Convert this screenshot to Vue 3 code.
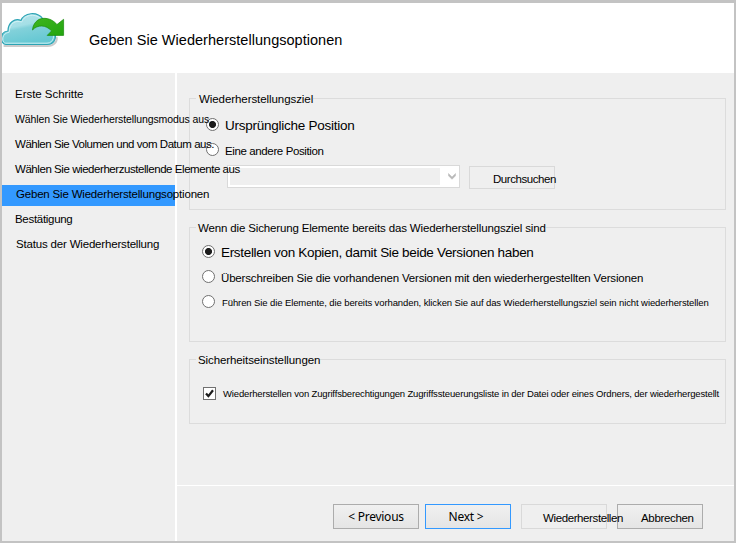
<script setup>
const steps = [
  { text: 'Erste Schritte', cls: 's1' },
  { text: 'Wählen Sie Wiederherstellungsmodus aus.', cls: 's2' },
  { text: 'Wählen Sie Volumen und vom Datum aus.', cls: 's3' },
  { text: 'Wählen Sie wiederherzustellende Elemente aus', cls: 's4' },
  { text: 'Geben Sie Wiederherstellungsoptionen', cls: 's5', active: true },
  { text: 'Bestätigung', cls: 's6' },
  { text: 'Status der Wiederherstellung', cls: 's7' },
]
</script>

<template>
  <div class="window">
    <header class="header">
      <svg class="logo" viewBox="0 0 64 40" width="64" height="40">
        <defs>
          <linearGradient id="cloud" x1="0" y1="0" x2="0.35" y2="1">
            <stop offset="0" stop-color="#b9e6ec" />
            <stop offset="0.45" stop-color="#a4dfe6" />
            <stop offset="0.55" stop-color="#82d1da" />
            <stop offset="1" stop-color="#66c8d3" />
          </linearGradient>
          <linearGradient id="arrow" x1="0" y1="0" x2="1" y2="1">
            <stop offset="0" stop-color="#3fb51f" />
            <stop offset="1" stop-color="#23a50f" />
          </linearGradient>
        </defs>
        <path d="M1 32 H45 C51 32 55 28 54 23" fill="none" stroke="#b5b5b5" stroke-width="2" transform="translate(0.6 1)" opacity="0.7" />
        <path d="M4 31.500 C-2 31.500 -3 19 6 18 C6 9 13 5 19 7.500 C22 -0.500 35 -2 41 6 C48 6 51 12 50 17 C56 20.500 54 31.500 45 31.500 Z"
          fill="url(#cloud)" stroke="#2ba3b4" stroke-width="1.2" />
        <path d="M4 30.200 C-.5 30.200 -1 20.400 7.200 19.200 C7.200 10.500 13.500 6.800 19.700 9 C22.500 1.200 34.500 -.4 40.300 7.300 C46 7.300 49.700 12.500 48.700 17.700 C53.500 21 52 30.200 45 30.200 Z"
          fill="none" stroke="#d6f3f6" stroke-width="0.9" />
        <path d="M30.500 17 C31 10 36 5.300 42 5.300 C47.500 5.300 52 8 55 11.500 L61.600 6.300 V22.400 H45.200 L49.500 18 C44 11.500 35.500 11.500 30.500 17 Z"
          fill="url(#arrow)" stroke="#188a0c" stroke-width="0.7" />
      </svg>
      <h1 class="title">Geben Sie Wiederherstellungsoptionen</h1>
    </header>

    <div class="body">
      <nav class="nav">
        <div v-for="s in steps" :key="s.text" class="step" :class="[s.cls, { active: s.active }]">{{ s.text }}</div>
      </nav>

      <div class="content">
        <main class="main">
          <section class="group target">
            <div class="legend l1">Wiederherstellungsziel</div>
            <div class="option big o1"><i class="radio on"></i><span>Ursprüngliche Position</span></div>
            <div class="option o2"><i class="radio"></i><span>Eine andere Position</span></div>
            <div class="picker">
              <div class="combo">
                <div class="field"></div>
                <svg class="chevron" viewBox="0 0 8 7" width="8" height="7"><path d="M0.500 0.500 L4 4 L7.500 0.500 V2.800 L4 6.300 L0.500 2.800 Z" fill="#b8b8b8" stroke="#b8b8b8" stroke-width="0.5" /></svg>
              </div>
              <div class="btn browse">Durchsuchen</div>
            </div>
          </section>

          <section class="group existing">
            <div class="legend l2">Wenn die Sicherung Elemente bereits das Wiederherstellungsziel sind</div>
            <div class="option big o3"><i class="radio on"></i><span>Erstellen von Kopien, damit Sie beide Versionen haben</span></div>
            <div class="option o4"><i class="radio"></i><span>Überschreiben Sie die vorhandenen Versionen mit den wiederhergestellten Versionen</span></div>
            <div class="option small o5"><i class="radio"></i><span>Führen Sie die Elemente, die bereits vorhanden, klicken Sie auf das Wiederherstellungsziel sein nicht wiederherstellen</span></div>
          </section>

          <section class="group security">
            <div class="legend l3">Sicherheitseinstellungen</div>
            <div class="option small o6">
              <svg class="check" viewBox="0 0 13 13" width="13" height="13">
                <rect x="0.500" y="0.500" width="12" height="12" fill="#fff" stroke="#707070" />
                <path d="M3 6.400 L5.400 9.100 L10 3.200" fill="none" stroke="#1c1c1c" stroke-width="2.200" />
              </svg>
              <span>Wiederherstellen von Zugriffsberechtigungen Zugriffssteuerungsliste in der Datei oder eines Ordners, der wiederhergestellt</span>
            </div>
          </section>
        </main>

        <footer class="footer">
          <div class="btn raised latin">&lt; Previous</div>
          <div class="btn raised latin primary">Next &gt;</div>
          <div class="btn offset restore">Wiederherstellen</div>
          <div class="btn raised offset cancel">Abbrechen</div>
        </footer>
      </div>
    </div>
  </div>
</template>

<style>
body {
  margin: 0;
  background: #c3c3c3;
}
</style>

<style scoped>
.window {
  box-sizing: border-box;
  width: 736px;
  height: 543px;
  border: 2px solid #c3c3c3;
  border-top-width: 3px;
  background: #efefef;
  display: flex;
  flex-direction: column;
  font-family: "Liberation Sans", Arial, sans-serif;
  font-size: 11.5px;
  color: #000;
  white-space: nowrap;
  overflow: hidden;
}
.header {
  height: 70px;
  flex: none;
  background: #fff;
  display: flex;
}
.logo {
  margin-top: 10px;
  width: 64px;
  height: 40px;
}
.title {
  margin: 28px 0 0 23px;
  font-size: 14.5px;
  line-height: 18px;
  font-weight: normal;
  letter-spacing: 0.03px;
}
.body {
  display: flex;
  flex: 1;
}
.nav {
  box-sizing: border-box;
  width: 175px;
  flex: none;
  border-right: 2px solid #fff;
  padding-top: 12px;
  display: flex;
  flex-direction: column;
  gap: 4px;
  position: relative;
  z-index: 1;
}
.step {
  height: 21px;
  line-height: 18px;
  padding-left: 13px;
}
.active { background: #3399ff; }
.s1 { letter-spacing: -0.04px; }
.s2 { font-size: 10.5px; letter-spacing: -0.1px; }
.s3 { letter-spacing: -0.46px; }
.s4 { letter-spacing: -0.44px; }
.s5 { letter-spacing: -0.19px; padding-left: 14px; }
.s6 { letter-spacing: -0.3px; }
.s7 { letter-spacing: -0.18px; padding-left: 14px; }

.content {
  flex: 1;
  min-width: 0;
  display: flex;
  flex-direction: column;
}
.main {
  box-sizing: border-box;
  height: 412px;
  padding: 25px 8px 0 12px;
}
.group {
  box-sizing: border-box;
  width: 537px;
  border: 1px solid #dcdcdc;
}
.target { height: 112px; }
.existing { height: 115px; margin-top: 17px; }
.security { height: 65px; margin-top: 17px; }
.legend {
  width: max-content;
  height: 14px;
  line-height: 14px;
  margin: -7px 0 0 6px;
  padding: 0 0 0 2px;
  background: #efefef;
}
.l1 { letter-spacing: -0.07px; padding-left: 3px; }
.l2 { letter-spacing: -0.15px; }
.l3 { letter-spacing: -0.1px; }
.option {
  display: flex;
  align-items: flex-start;
  height: 13px;
  line-height: 16px;
}
.radio {
  box-sizing: border-box;
  width: 13px;
  height: 13px;
  flex: none;
  border: 1px solid #707070;
  border-radius: 50%;
  background: #fff;
}
.radio.on { background: radial-gradient(circle, #1c1c1c 3.1px, #fff 3.9px); }
.big { font-size: 13.5px; }
.small { font-size: 9.5px; }
.target .option { padding-left: 16px; gap: 6px; }
.existing .option { padding-left: 12px; gap: 6px; }
.security .option { padding-left: 13px; gap: 7px; }
.check { flex: none; }
.o1 { margin-top: 12px; letter-spacing: -0.25px; }
.o2 { margin-top: 12px; letter-spacing: -0.38px; }
.o3 { margin-top: 10px; letter-spacing: -0.32px; }
.o4 { margin-top: 12px; letter-spacing: -0.17px; }
.o5 { margin-top: 12px; letter-spacing: -0.1px; }
.existing .o5 { gap: 7px; }
.o6 { margin-top: 20px; line-height: 13px; letter-spacing: -0.16px; }
.picker {
  display: flex;
  margin: 9px 0 0 37px;
  gap: 9px;
}
.combo {
  box-sizing: border-box;
  width: 233px;
  height: 23px;
  border: 1px solid #d9d9d9;
  background: #fff;
  display: flex;
  align-items: center;
  padding-left: 2px;
}
.field {
  width: 210px;
  height: 17px;
  background: #efefef;
}
.chevron { margin-left: 8px; }
.btn {
  box-sizing: border-box;
  width: 86px;
  height: 25px;
  border: 1px solid #d9d9d9;
  text-align: center;
  line-height: 23px;
}
.browse {
  height: 23px;
  margin-top: 1px;
  padding-left: 23px;
  text-align: left;
  line-height: 24px;
  letter-spacing: -0.44px;
}
.footer {
  flex: 1;
  border-top: 1px solid #fff;
  display: flex;
  padding: 18px 0 0 156px;
}
.raised {
  border-color: #acacac;
  background: linear-gradient(#f0f0f0, #e5e5e5);
}
.latin {
  font-family: "Noto Sans", "Open Sans", sans-serif;
  font-size: 12px;
  line-height: 24px;
  letter-spacing: -0.25px;
}
.primary { border-color: #3399ff; margin-left: 6px; padding-right: 4px; }
.offset {
  margin-left: 10px;
  padding-left: 21px;
  text-align: left;
  line-height: 26px;
}
.restore {
  position: relative;
  z-index: 1;
  letter-spacing: -0.39px;
}
.cancel { padding-left: 23px; letter-spacing: -0.34px; }
</style>
